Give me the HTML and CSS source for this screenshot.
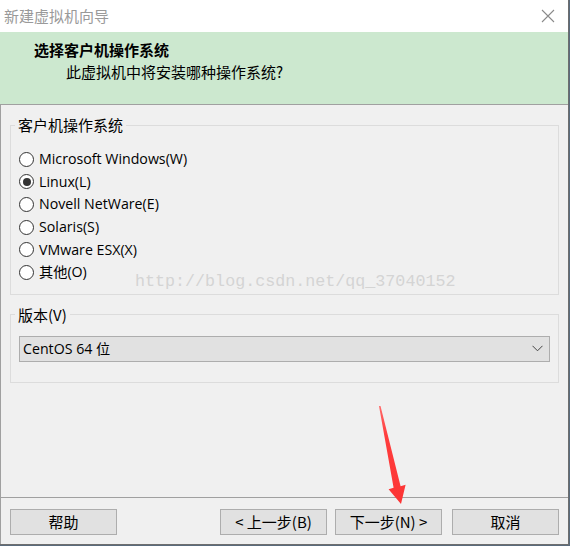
FILE: index.html
```html
<!DOCTYPE html>
<html lang="zh-CN">
<head>
<meta charset="utf-8">
<title>新建虚拟机向导</title>
<link rel="stylesheet" href="styles.css">
</head>
<body>
<div class="window">
  <div class="titlebar">
    <span class="title">新建虚拟机向导</span>
    <svg class="close" width="14" height="14" viewBox="0 0 14 14"><path d="M1 1 L13 13 M13 1 L1 13" stroke="#8a8a8a" stroke-width="1.1" fill="none"/></svg>
  </div>
  <div class="header">
    <div class="h-title">选择客户机操作系统</div>
    <div class="h-sub">此虚拟机中将安装哪种操作系统?</div>
  </div>
  <div class="content">
    <fieldset class="group group-os">
      <legend>客户机操作系统</legend>
      <div class="radio"><span class="dot"></span><span class="label">Microsoft Windows(W)</span></div>
      <div class="radio"><span class="dot checked"></span><span class="label">Linux(L)</span></div>
      <div class="radio"><span class="dot"></span><span class="label">Novell NetWare(E)</span></div>
      <div class="radio"><span class="dot"></span><span class="label">Solaris(S)</span></div>
      <div class="radio"><span class="dot"></span><span class="label">VMware ESX(X)</span></div>
      <div class="radio"><span class="dot"></span><span class="label">其他(O)</span></div>
    </fieldset>
    <fieldset class="group group-ver">
      <legend>版本(V)</legend>
      <div class="select">
        <span class="sel-text">CentOS 64 位</span>
        <svg class="chev" width="11" height="7" viewBox="0 0 11 7"><path d="M0.5 0.8 L5.5 5.8 L10.5 0.8" stroke="#444" stroke-width="1" fill="none"/></svg>
      </div>
    </fieldset>
  </div>
  <div class="footer">
    <div class="btn">帮助</div>
    <div class="btn-group">
      <div class="btn">&lt; 上一步(B)</div>
      <div class="btn btn-next">下一步(N) &gt;</div>
      <div class="btn btn-cancel">取消</div>
    </div>
  </div>
  <div class="watermark">http://blog.csdn.net/qq_37040152</div>
  <svg class="arrow" width="60" height="110" viewBox="370 400 60 110">
    <defs>
      <linearGradient id="ag" x1="0" y1="0" x2="0" y2="1">
        <stop offset="0" stop-color="#ff6a6a"/>
        <stop offset="0.3" stop-color="#ff3d3d"/>
        <stop offset="1" stop-color="#fc3434"/>
      </linearGradient>
    </defs>
    <polygon points="379,406 380.5,406 400.6,486.2 405.6,484.8 401,504 388.6,489.2 393.6,487.8" fill="url(#ag)"/>
  </svg>
</div>
</body>
</html>
```
FILE: styles.css
```css
* { box-sizing: border-box; }
html, body {
  margin: 0;
  padding: 0;
}
body {
  width: 570px;
  height: 546px;
  background: #5a6b7c;
  font-family: "Noto Sans CJK SC", "Noto Sans", sans-serif;
  font-size: 15px;
  color: #000;
  overflow: hidden;
}
.window {
  position: relative;
  width: 569px;
  height: 545px;
  background: #f0f0f0;
  border-right: 1px solid #6e6e6e;
  border-bottom: 1px solid #6e6e6e;
  display: flex;
  flex-direction: column;
}
.titlebar {
  height: 32px;
  background: #fff;
  display: flex;
  align-items: center;
  justify-content: space-between;
  padding: 0 13px 0 4px;
}
.title {
  color: #9a9a9a;
  font-size: 15px;
  line-height: 20px;
}
.close { display: block; }
.header {
  height: 73px;
  background: #cce8cf;
  border-bottom: 1px solid #a0a0a0;
  padding-top: 7px;
}
.h-title {
  font-weight: bold;
  line-height: 22px;
  padding-left: 34px;
}
.h-sub {
  line-height: 22px;
  padding-left: 66px;
}
.content {
  flex: 1;
  border-left: 1px solid #a0a0a0;
  padding: 10px 9px 0 9px;
  display: flex;
  flex-direction: column;
  gap: 10px;
}
.group {
  margin: 0;
  border: 1px solid #dcdcdc;
  padding: 0 8px;
  min-width: 0;
}
.group legend {
  padding: 0 3px;
  margin-left: -4px;
  line-height: 20px;
}
.group-os {
  padding-top: 13px;
  padding-bottom: 10px;
}
.radio {
  display: flex;
  align-items: center;
  height: 22.6px;
}
.dot {
  width: 15px;
  height: 15px;
  border: 1px solid #333;
  border-radius: 50%;
  background: #fff;
  display: flex;
  align-items: center;
  justify-content: center;
  margin-right: 5px;
  flex: none;
}
.dot.checked::after {
  content: "";
  width: 8px;
  height: 8px;
  border-radius: 50%;
  background: #333;
}
.label {
  line-height: 20px;
  font-family: "Open Sans", "Noto Sans CJK SC", sans-serif;
  font-size: 14.2px;
}
.group-ver {
  padding-top: 11px;
  padding-bottom: 20px;
}
.select {
  height: 26px;
  background: #e1e1e1;
  border: 1px solid #adadad;
  display: flex;
  align-items: center;
  justify-content: space-between;
  padding: 0 6px 0 3px;
}
.sel-text {
  font-family: "Open Sans", "Noto Sans CJK SC", sans-serif;
  font-size: 14.2px;
  line-height: 20px;
}
.chev { display: block; }
.footer {
  height: 47px;
  border-top: 1px solid #a0a0a0;
  border-left: 1px solid #a0a0a0;
  display: flex;
  padding: 11px 9px 0 9px;
}
.btn-group {
  margin-left: auto;
  display: flex;
}
.btn {
  width: 107px;
  height: 26px;
  background: #e1e1e1;
  border: 1px solid #adadad;
  display: flex;
  align-items: center;
  justify-content: center;
  line-height: 20px;
}
.btn-next { margin-left: 8px; }
.btn-cancel { margin-left: 10px; }
.watermark {
  position: absolute;
  left: 135px;
  top: 272px;
  font-family: "Liberation Mono", monospace;
  font-size: 16.7px;
  line-height: 20px;
  color: #d4d4d4;
  white-space: nowrap;
}
.arrow {
  position: absolute;
  left: 370px;
  top: 400px;
}
```
